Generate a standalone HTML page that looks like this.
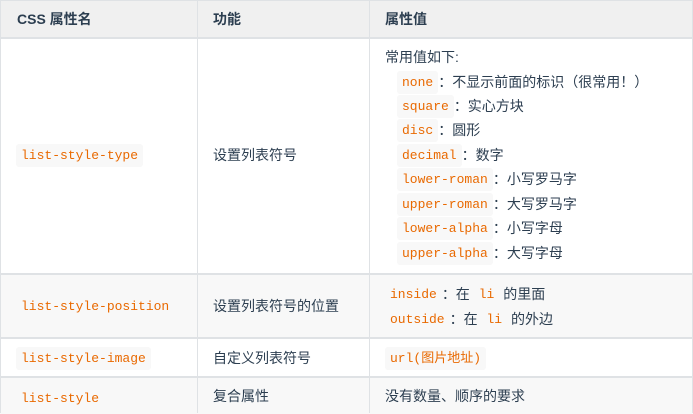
<!DOCTYPE html><html><head><meta charset="utf-8"><style>
body{margin:0;width:693px;height:413px;overflow:hidden;background:#fff;font-family:"Liberation Sans","Noto Sans CJK SC",sans-serif;font-size:14px;color:#2c3e50;position:relative}
.r{position:absolute;left:0;width:693px;box-sizing:border-box;border-bottom:2px solid #dfe2e5}
.v{position:absolute;top:0;bottom:0;width:1px;background:#dfe2e5}
.t{position:absolute;white-space:nowrap;line-height:24px}
code{font-family:"Liberation Mono","Noto Sans CJK SC",monospace;font-size:13px;color:#e96900;background:#f8f8f8;border-radius:3px;padding:4px 5px;position:relative;top:-1px}
</style></head><body>
<div class="r" style="top:0;height:39px;background:#f0f0f0;border-top:1px solid #dfe2e5"></div>
<div class="r" style="top:39px;height:236px;background:#fff"></div>
<div class="r" style="top:275px;height:64px;background:#f8f8f8"></div>
<div class="r" style="top:339px;height:39px;background:#fff"></div>
<div class="r" style="top:378px;height:36px;background:#f8f8f8;border-bottom:none"></div>
<div class="v" style="left:0"></div><div class="v" style="left:197px"></div><div class="v" style="left:369px"></div><div class="v" style="left:692px"></div>
<div class="t" style="left:17px;top:7px;font-weight:bold">CSS 属性名</div>
<div class="t" style="left:213px;top:7px;font-weight:bold">功能</div>
<div class="t" style="left:385px;top:7px;font-weight:bold">属性值</div>
<div class="t" style="left:16px;top:143px"><code>list-style-type</code></div>
<div class="t" style="left:213px;top:143px">设置列表符号</div>
<div class="t" style="left:385px;top:45px">常用值如下:</div>
<div class="t" style="left:397px;top:70px"><code>none</code>：不显示前面的标识（很常用！）</div>
<div class="t" style="left:397px;top:94px"><code>square</code>：实心方块</div>
<div class="t" style="left:397px;top:118px"><code>disc</code>：圆形</div>
<div class="t" style="left:397px;top:143px"><code>decimal</code>：数字</div>
<div class="t" style="left:397px;top:167px"><code>lower-roman</code>：小写罗马字</div>
<div class="t" style="left:397px;top:192px"><code>upper-roman</code>：大写罗马字</div>
<div class="t" style="left:397px;top:216px"><code>lower-alpha</code>：小写字母</div>
<div class="t" style="left:397px;top:241px"><code>upper-alpha</code>：大写字母</div>
<div class="t" style="left:16px;top:294px"><code>list-style-position</code></div>
<div class="t" style="left:213px;top:294px">设置列表符号的位置</div>
<div class="t" style="left:385px;top:282px"><code>inside</code>：在 <code>li</code> 的里面</div>
<div class="t" style="left:385px;top:307px"><code>outside</code>：在 <code>li</code> 的外边</div>
<div class="t" style="left:16px;top:346px"><code>list-style-image</code></div>
<div class="t" style="left:213px;top:346px">自定义列表符号</div>
<div class="t" style="left:385px;top:346px"><code>url(图片地址)</code></div>
<div class="t" style="left:16px;top:386px"><code>list-style</code></div>
<div class="t" style="left:213px;top:384px">复合属性</div>
<div class="t" style="left:385px;top:384px">没有数量、顺序的要求</div>
</body></html>
